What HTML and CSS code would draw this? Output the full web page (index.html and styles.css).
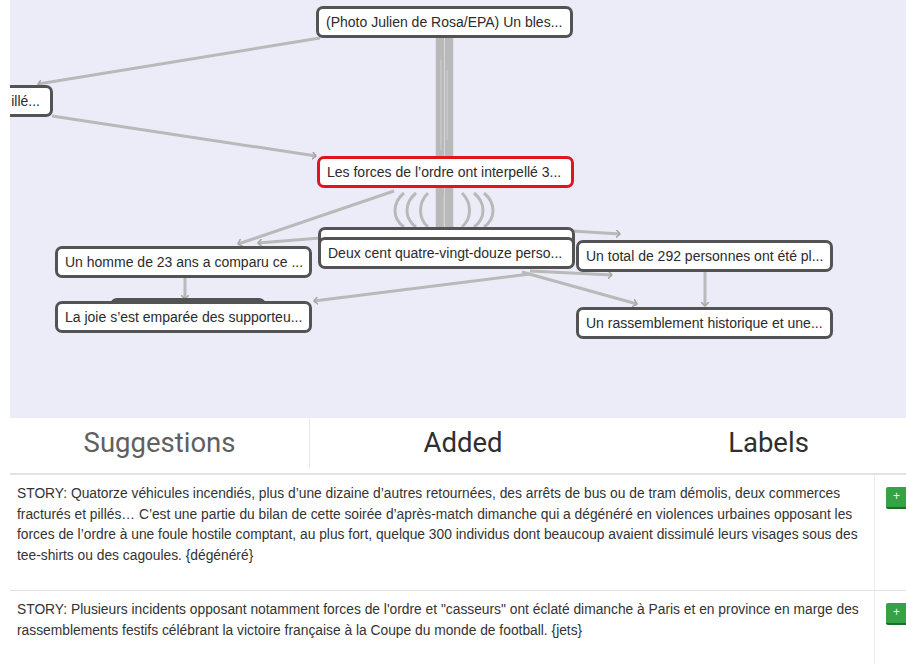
FILE: index.html
```html
<!doctype html>
<html>

<head>
  <meta charset="UTF-8">
  <title>Story graph</title>
  <link rel="stylesheet" href="styles.css">
</head>

<body>
  <div class="graph">
    <svg class="edges" width="896" height="418" viewBox="10 0 896 418">
      <defs>
        <marker id="tip" markerWidth="5" markerHeight="8" refX="4" refY="4" orient="auto" markerUnits="userSpaceOnUse">
          <path d="M0 0 L4 4 L0 8" fill="none" stroke="#a6a6a6" stroke-width="1.5"/>
        </marker>
      </defs>
      <!-- bundle from the photo node down to the stacked node -->
      <g class="bundle">
        <line x1="438" y1="36" x2="438" y2="230"/>
        <line x1="442" y1="36" x2="442" y2="230"/>
        <line x1="447" y1="36" x2="447" y2="230"/>
        <line x1="451" y1="36" x2="451" y2="230"/>
      </g>
      <g class="stripes">
        <line x1="441" y1="60" x2="441" y2="150"/>
        <line x1="447" y1="70" x2="447" y2="140"/>
        <line x1="444" y1="196" x2="444" y2="226"/>
      </g>
      <!-- loops under the selected node -->
      <g class="loops">
        <path d="M404 193 C392 203, 392 218, 404 227"/>
        <path d="M416 193 C404 203, 404 218, 416 227"/>
        <path d="M428 193 C418 203, 418 218, 428 227"/>
        <path d="M462 193 C472 203, 472 218, 462 227"/>
        <path d="M474 193 C486 203, 486 218, 474 227"/>
        <path d="M484 193 C496 203, 496 218, 484 227"/>
      </g>
      <g class="links">
        <line x1="320" y1="38" x2="38" y2="84" marker-end="url(#tip)"/>
        <line x1="52" y1="116" x2="316" y2="156" marker-end="url(#tip)"/>
        <line x1="394" y1="191" x2="238" y2="244" marker-end="url(#tip)"/>
        <line x1="320" y1="238" x2="258" y2="243" marker-end="url(#tip)"/>
        <line x1="185" y1="278" x2="185" y2="299" marker-end="url(#tip)"/>
        <line x1="530" y1="274" x2="314" y2="301" marker-end="url(#tip)"/>
        <line x1="522" y1="272" x2="637" y2="304" marker-end="url(#tip)"/>
        <line x1="530" y1="271" x2="612" y2="275" marker-end="url(#tip)"/>
        <line x1="572" y1="231" x2="620" y2="234" marker-end="url(#tip)"/>
        <line x1="705" y1="272" x2="705" y2="306" marker-end="url(#tip)"/>
      </g>
    </svg>

    <div class="node node-edge">illé...</div>
    <div class="node" style="left: 306px; top: 6px;">(Photo Julien de Rosa/EPA) Un bles...</div>
    <div class="node selected" style="left: 307px; top: 156px;">Les forces de l’ordre ont interpellé 3...</div>
    <div class="node" style="left: 308px; top: 227px;">&nbsp;</div>
    <div class="node" style="left: 308px; top: 237px;">Deux cent quatre-vingt-douze perso...</div>
    <div class="node" style="left: 566px; top: 240px;">Un total de 292 personnes ont été pl...</div>
    <div class="node" style="left: 45px; top: 246px;">Un homme de 23 ans a comparu ce ...</div>
    <div class="node short" style="left: 100px; top: 298px;">&nbsp;</div>
    <div class="node" style="left: 45px; top: 301px;">La joie s’est emparée des supporteu...</div>
    <div class="node" style="left: 566px; top: 307px;">Un rassemblement historique et une...</div>
  </div>

  <div class="tabs">
    <div class="tab muted">Suggestions</div>
    <div class="tab">Added</div>
    <div class="tab">Labels</div>
  </div>

  <div class="stories">
    <div class="story-row">
      <div class="story">STORY: Quatorze véhicules incendiés, plus d’une dizaine d’autres retournées, des arrêts de bus ou de tram démolis, deux commerces fracturés et pillés… C’est une partie du bilan de cette soirée d’après-match dimanche qui a dégénéré en violences urbaines opposant les forces de l’ordre à une foule hostile comptant, au plus fort, quelque 300 individus dont beaucoup avaient dissimulé leurs visages sous des tee-shirts ou des cagoules. {dégénéré}</div>
      <div class="actions"><button class="add">+</button></div>
    </div>
    <div class="story-row">
      <div class="story">STORY: Plusieurs incidents opposant notamment forces de l'ordre et "casseurs" ont éclaté dimanche à Paris et en province en marge des rassemblements festifs célébrant la victoire française à la Coupe du monde de football. {jets}</div>
      <div class="actions"><button class="add">+</button></div>
    </div>
  </div>
</body>

</html>
```

FILE: styles.css
```css
body {
  margin: 0;
  padding-left: 10px;
  overflow: hidden;
  font-family: "Liberation Sans", Arial, sans-serif;
  color: #333;
  background: #fff;
}

/* graph canvas */
.graph {
  position: relative;
  height: 418px;
  background: #ececf9;
  overflow: hidden;
}

.edges {
  position: absolute;
  left: 0;
  top: 0;
}

.bundle line {
  stroke: #b9b9b9;
  stroke-width: 4.5;
}

.links line,
.loops path {
  stroke: #b9b9b9;
  stroke-width: 3;
  fill: none;
}

.stripes line {
  stroke: #cfcfd6;
  stroke-width: 1;
}

.node {
  position: absolute;
  width: 237px;
  height: 26px;
  padding: 0 7px;
  line-height: 26px;
  font-size: 14px;
  color: #2b2b2b;
  white-space: nowrap;
  overflow: hidden;
  background: #fff;
  border: 3px solid #535353;
  border-radius: 7px;
}

.node.selected {
  border-color: #e4141c;
}

.node.short {
  width: 136px;
}

.node-edge {
  right: 853px;
  top: 85px;
  text-align: right;
  padding-right: 10px;
}

/* tabs */
.tabs {
  display: grid;
  grid-template-columns: 300px 306px 305px;
  height: 55px;
  border-bottom: 2px solid #e2e2e2;
}

.tab {
  font-family: Roboto, sans-serif;
  font-size: 27.5px;
  line-height: 50px;
  text-align: center;
  color: #2f2f2f;
}

.tab.muted {
  color: #606060;
  border-right: 1px solid #e8e8e8;
  margin-bottom: 5px;
}

/* story list */
.story-row {
  display: flex;
  border-bottom: 1px solid #e0e0e0;
}

.story {
  flex: 1;
  padding: 9px 7px 24px;
  font-size: 13.8px;
  line-height: 20.5px;
  color: #333;
  border-right: 1px solid #ececec;
}

.actions {
  width: 20px;
  padding: 11px 0 0 11px;
}

.add {
  width: 24px;
  height: 22px;
  padding: 0 0 2px 7px;
  border: 0;
  border-bottom: 2px solid #1f6b2b;
  border-radius: 2px;
  background: #35a245;
  color: #e8ffe8;
  font-size: 12px;
  line-height: 18px;
  text-align: left;
}
```
